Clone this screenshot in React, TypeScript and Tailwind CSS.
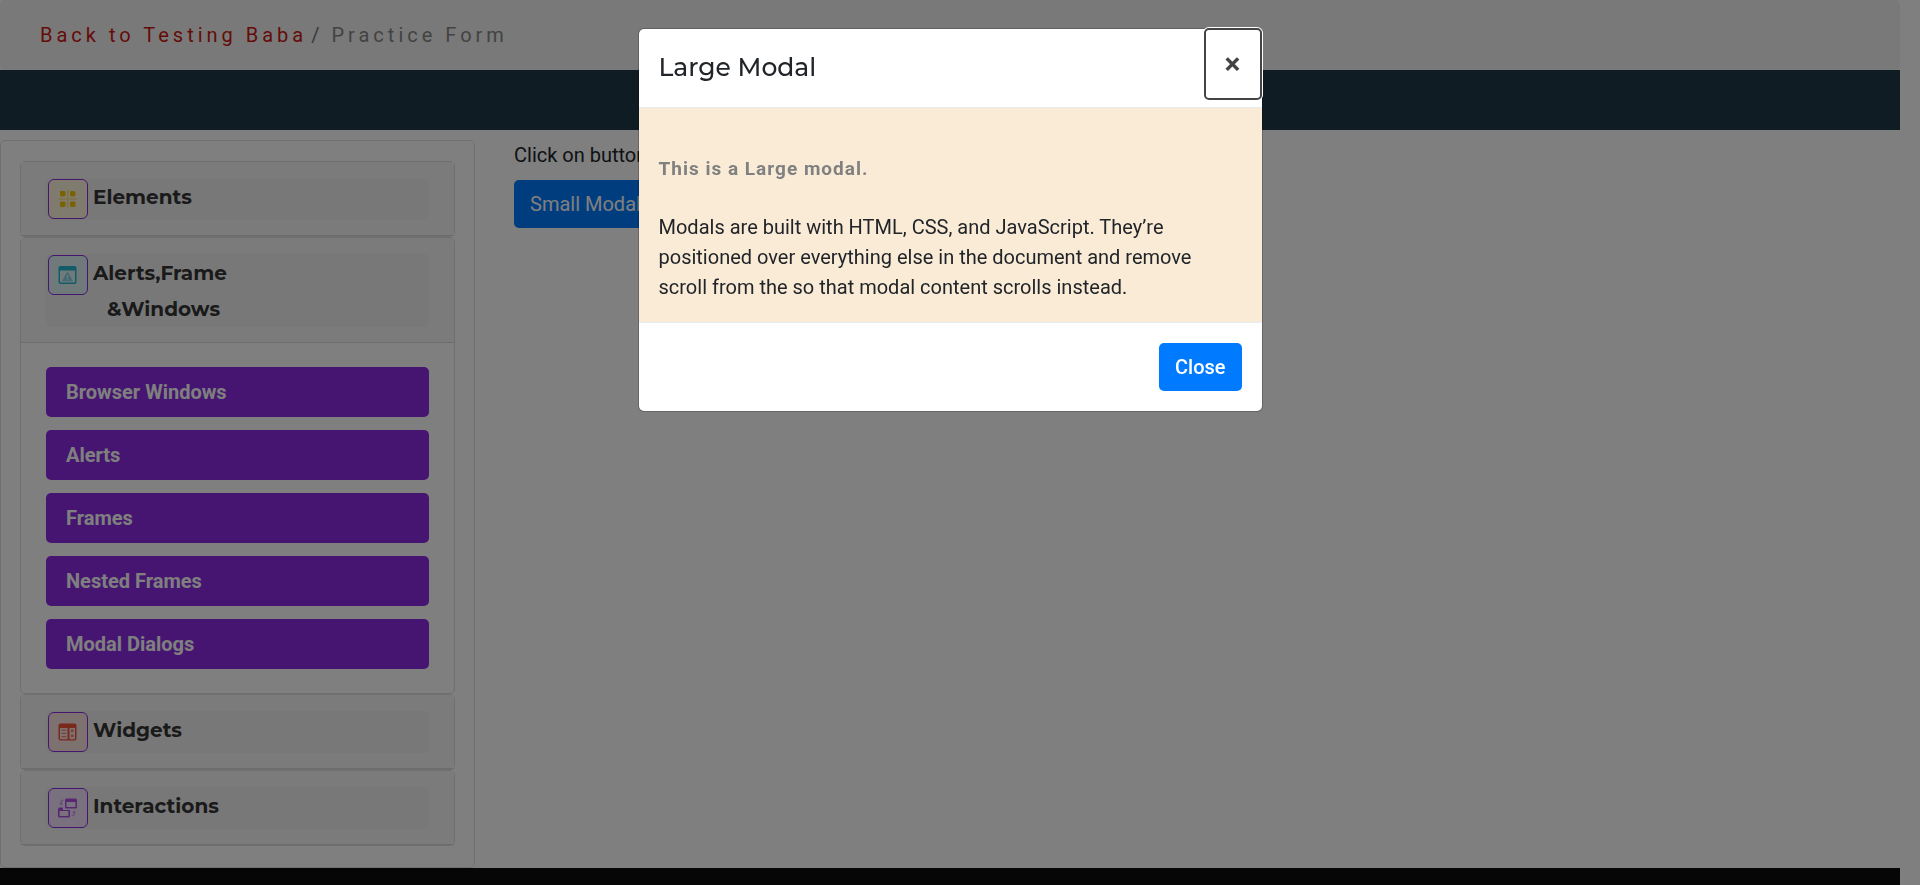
import React from "react";

const heading = "font-['Montserrat','Inter',sans-serif]";

function ElementsIcon() {
  return (
    <svg viewBox="0 0 20 20" className="size-5" fill="#f5c400">
      <rect x="2" y="2" width="5.5" height="5.5" rx="1.4" />
      <rect x="12" y="2" width="5.5" height="5.5" rx="1.4" />
      <rect x="2" y="12.5" width="5.5" height="5.5" rx="1.4" />
      <rect x="12" y="12.5" width="5.5" height="5.5" rx="1.4" />
      <path d="M9 1h1.4v18H9zM.5 9.3h18.5v1.4H.5z" opacity=".4" />
    </svg>
  );
}

function AlertsIcon() {
  return (
    <svg viewBox="0 0 20 20" className="size-5" fill="#22b8cf">
      <path
        fillRule="evenodd"
        d="M2.5 1h14A2 2 0 0 1 18.500 3v14a2 2 0 0 1-2 2h-14a2 2 0 0 1-2-2V3a2 2 0 0 1 2-2zM2 5.500V16.500a1 1 0 0 0 1 1h13a1 1 0 0 0 1-1V5.500z"
      />
      <path
        fillRule="evenodd"
        opacity=".5"
        d="M9.500 6.500 15 16.200H4zM8.900 10v3.200h1.300V10zm0 4v1.300h1.300V14z"
      />
    </svg>
  );
}

function WidgetsIcon() {
  return (
    <svg viewBox="0 0 20 20" className="size-5" fill="#f4523b">
      <path
        fillRule="evenodd"
        d="M2.500 1.500h14a2 2 0 0 1 2 2v13a2 2 0 0 1-2 2h-14a2 2 0 0 1-2-2v-13a2 2 0 0 1 2-2zM2 6v10.500a.7.700 0 0 0 .7.700H9.500V6zM11.500 6v11.200h4.800a.7.700 0 0 0 .7-.7V6z"
      />
      <path d="M3.500 7.500h4.700v1.300H3.500zM3.500 10.800h4.700v1.300H3.500zM3.500 14h4.700v1.300H3.500zM13 7.500h2.700v2.600H13zM13 12.500h2.700v2.600H13z" opacity=".65" />
    </svg>
  );
}

function InteractionsIcon() {
  return (
    <svg viewBox="0 0 20 20" className="size-5" fill="#b04ee8">
      <path
        fillRule="evenodd"
        d="M8.500.500h9A1.500 1.500 0 0 1 19 2v7a1.500 1.500 0 0 1-1.500 1.500h-9A1.500 1.500 0 0 1 7 9V2A1.500 1.500 0 0 1 8.500.500zM8.500 4v4.600c0 .3.200.500.500.500h8c.3 0 .500-.2.500-.500V4z"
      />
      <path
        fillRule="evenodd"
        d="M1.500 9.500H5V12h7v6a1.500 1.500 0 0 1-1.500 1.500h-9A1.500 1.500 0 0 1 0 18v-7a1.500 1.500 0 0 1 1.500-1.500zM1.600 13v4.400c0 .3.200.6.500.6h7.700c.3 0 .6-.3.600-.6V13z"
      />
      <path d="M5.500 1.500v1.600C4 3.100 3.800 3.800 3.800 5h1.400L3 8 .9 5h1.400c0-2.300.8-3.500 3.200-3.500zM13.700 18.500v-1.600c1.500 0 1.700-.7 1.700-1.900H14l2.200-3 2.100 3h-1.400c0 2.300-.8 3.500-3.200 3.500z" opacity=".45" />
    </svg>
  );
}

type SectionProps = {
  icon: React.ReactNode;
  tint: string;
  title: string;
  second?: string;
  children?: React.ReactNode;
};

function Section({ icon, tint, title, second, children }: SectionProps) {
  return (
    <section className="rounded-[5px] border border-[#dfdfdf]">
      <div className="border-b border-[#d8d8d8] bg-[#f7f7f7] px-[25px] pt-4 pb-[15px]">
        <button
          type="button"
          className={`flex w-full items-start rounded-[5px] bg-[#f0f0f0] pl-0.5 text-left leading-9 font-bold text-[#343434] ${heading}`}
        >
          <span className={`my-px flex size-10 shrink-0 items-center justify-center rounded-md border border-[#8a2be2] ${tint}`}>
            {icon}
          </span>
          <span className="pt-px pl-[5px]">
            {title}
            {second && <span className="block pl-3.5">{second}</span>}
          </span>
        </button>
      </div>
      {children}
    </section>
  );
}

const links = ["Browser Windows", "Alerts", "Frames", "Nested Frames", "Modal Dialogs"];

export default function App() {
  return (
    <div className="flex min-h-screen flex-col bg-white pr-5 font-['Roboto',sans-serif] text-xl leading-[30px] text-[#212529]">
      <nav aria-label="Breadcrumb" className="rounded-[5px] bg-[#f3f3f3] px-10 py-5 tracking-[4px] text-[#6c757d]">
        <a href="#" className="text-[#c8190f]">Back to Testing Baba</a>
        <span className="pr-2 pl-1">/</span>
        <span className="text-[#868686]">Practice Form</span>
      </nav>
      <div className="h-[60px] bg-[#1f3947]" />

      <main className="mt-2.5 flex grow">
        <aside className="w-1/4 rounded-[5px] border border-[#dfdfdf] px-[19px] py-5">
          <Section icon={<ElementsIcon />} tint="bg-[#fff8df]" title="Elements" />
          <Section icon={<AlertsIcon />} tint="bg-[#e0f4f7]" title="Alerts,Frame" second="&Windows">
            <ul className="flex flex-col gap-[13px] px-[25px] pt-6 pb-6">
              {links.map((label) => (
                <li key={label}>
                  <a href="#" className="block rounded-[5px] bg-[#8a2be2] px-5 py-2.5 font-bold text-white">
                    {label}
                  </a>
                </li>
              ))}
            </ul>
          </Section>
          <Section icon={<WidgetsIcon />} tint="bg-[#fde5e2]" title="Widgets" />
          <Section icon={<InteractionsIcon />} tint="bg-[#f3e5fd]" title="Interactions" />
        </aside>
        <div className="grow pl-[39px]">
          <p>Click on button</p>
          <button type="button" className="mt-2.5 rounded-[5px] bg-[#007bff] px-4 py-[9px] text-white">
            Small Modal
          </button>
        </div>
      </main>
      <footer className="h-[17px] bg-[#0d0d0d]" />

      <div className="fixed inset-0 bg-black/50 pt-7 pr-5">
        <div
          role="dialog"
          aria-modal="true"
          aria-labelledby="modal-title"
          className="mx-auto max-w-[625px] rounded-md border border-black/20 bg-white bg-clip-padding"
        >
          <div className="flex items-start justify-between border-b border-[#e9ecef]">
            <h5 id="modal-title" className={`px-5 pt-[19px] pb-[21px] text-[25px] leading-[38px] font-medium ${heading}`}>
              Large Modal
            </h5>
            <button
              type="button"
              aria-label="Close dialog"
              className="-mt-px h-[72px] w-[58px] rounded-[5px] border-2 border-[#444444] bg-white text-3xl font-bold text-[#444444] ring-1 ring-white"
            >
              ×
            </button>
          </div>
          <div className="bg-[#faebd7] px-5 pt-[46px] pb-5">
            <h6 className="mb-7 text-[19px] font-bold tracking-[1px] text-[#808080]">This is a Large modal.</h6>
            <p>
              Modals are built with HTML, CSS, and JavaScript. They’re positioned over everything
              else in the document and remove scroll from the so that modal content scrolls instead.
            </p>
          </div>
          <div className="flex justify-end border-t border-[#e9ecef] p-5">
            <button type="button" className="rounded-[5px] bg-[#007bff] px-4 py-[9px] font-medium text-white">
              Close
            </button>
          </div>
        </div>
      </div>
    </div>
  );
}
